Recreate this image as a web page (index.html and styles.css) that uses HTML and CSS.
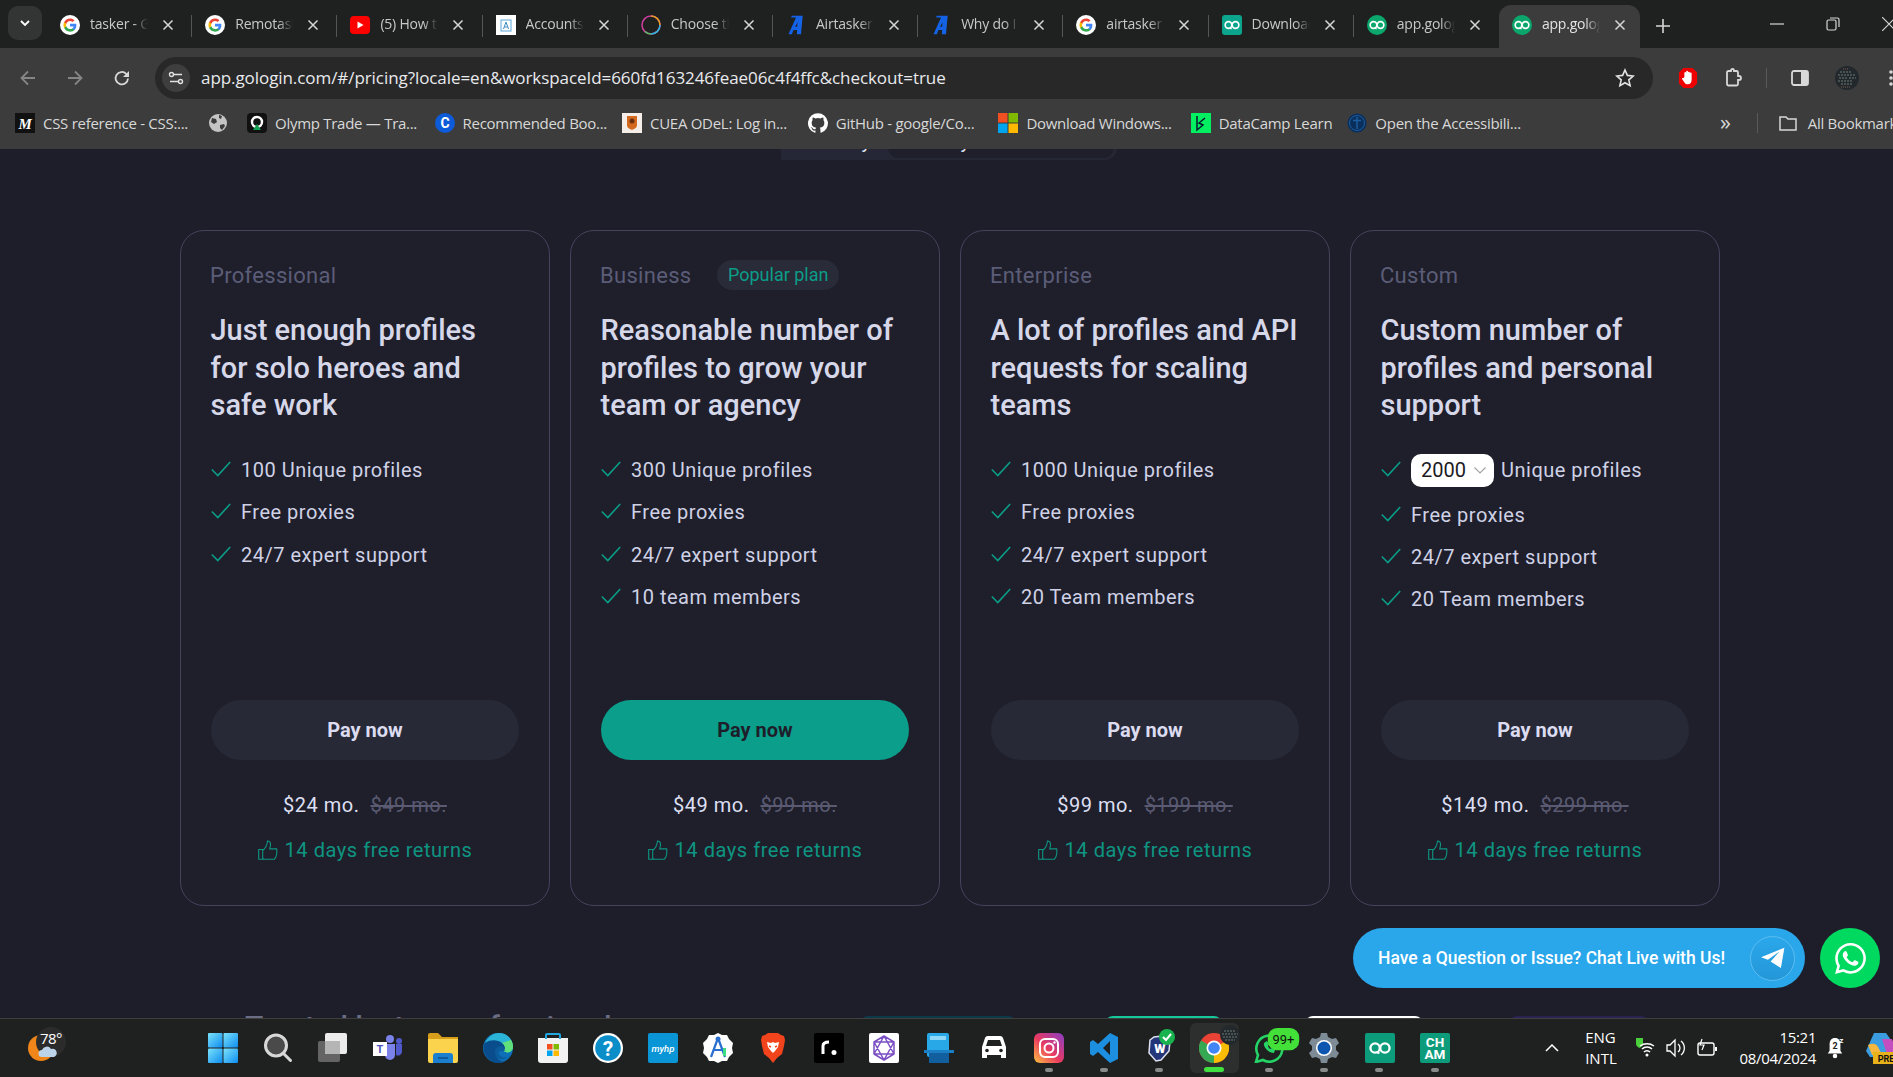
FILE: index.html
```html
<!DOCTYPE html>
<html lang="en">
<head>
<meta charset="utf-8">
<title>GoLogin pricing</title>
<link rel="stylesheet" href="styles.css">
</head>
<body>
<svg class="defs" aria-hidden="true">
  <symbol id="g" viewBox="0 0 24 24">
    <circle cx="12" cy="12" r="12" fill="#fff"/>
    <g transform="translate(3.4 3.4) scale(.72)">
    <path fill="#4285F4" d="M22.56 12.25c0-.78-.07-1.53-.2-2.25H12v4.26h5.92c-.26 1.37-1.04 2.53-2.21 3.31v2.77h3.57c2.08-1.92 3.28-4.74 3.28-8.09z"/>
    <path fill="#34A853" d="M12 23c2.97 0 5.46-.98 7.28-2.66l-3.57-2.77c-.98.66-2.23 1.06-3.71 1.06-2.86 0-5.29-1.93-6.16-4.53H2.18v2.84C3.99 20.53 7.7 23 12 23z"/>
    <path fill="#FBBC05" d="M5.84 14.09c-.22-.66-.35-1.36-.35-2.09s.13-1.43.35-2.09V7.07H2.18C1.43 8.55 1 10.22 1 12s.43 3.45 1.18 4.93l2.85-2.22.81-.62z"/>
    <path fill="#EA4335" d="M12 5.38c1.62 0 3.06.56 4.21 1.64l3.15-3.15C17.45 2.09 14.97 1 12 1 7.7 1 3.99 3.47 2.18 7.07l3.66 2.84c.87-2.6 3.3-4.53 6.16-4.53z"/>
    </g>
  </symbol>
  <symbol id="close" viewBox="0 0 12 12"><path d="M1.5 1.5l9 9M10.500 1.500l-9 9" stroke="#d6d6d6" stroke-width="1.500" fill="none"/></symbol>
  <symbol id="inf" viewBox="0 0 24 24"><circle cx="7.800" cy="12" r="4" fill="none" stroke="#fff" stroke-width="2"/><circle cx="16.200" cy="12" r="4" fill="none" stroke="#fff" stroke-width="2"/><path d="M9 15.500l2.500 1" stroke="#fff" stroke-width="1.800"/></symbol>
  <symbol id="airtasker" viewBox="0 0 20 24"><path d="M13 1h5l-2 22h-5l.4-5H7l-2 5H1L10 3H4l1-2h8zm-1.200 8L9 14h2.400z" fill="#1463e6" fill-rule="evenodd"/></symbol>
  <symbol id="check" viewBox="0 0 20 16"><path d="M.8 8.500l6 6L19.200 1" fill="none" stroke="#0a9d87" stroke-width="1.600"/></symbol>
  <symbol id="thumb" viewBox="0 0 20 20"><path d="M.7 9.500h4v9.800h-4zM4.700 10.500c2-1.500 4.300-4.500 4.800-9.500 2 0 3 1.500 3 3.500 0 1.500-.5 3-.8 4.400h7c.5 5-1 9-2.500 10.400H6.500l-1.800-.8" fill="none" stroke="#0e9582" stroke-width="1.100"/></symbol>
  <symbol id="wa" viewBox="0 0 24 24"><path fill="#fff" d="M17.472 14.382c-.297-.149-1.758-.867-2.03-.967-.273-.099-.471-.148-.67.15-.197.297-.767.966-.94 1.164-.173.199-.347.223-.644.075-.297-.15-1.255-.463-2.39-1.475-.883-.788-1.48-1.761-1.653-2.059-.173-.297-.018-.458.13-.606.134-.133.298-.347.446-.52.149-.174.198-.298.298-.497.099-.198.05-.371-.025-.52-.075-.149-.669-1.612-.916-2.207-.242-.579-.487-.5-.669-.51-.173-.008-.371-.01-.57-.01-.198 0-.52.074-.792.372-.272.297-1.04 1.016-1.04 2.479 0 1.462 1.065 2.875 1.213 3.074.149.198 2.096 3.2 5.077 4.487.709.306 1.262.489 1.694.625.712.227 1.36.195 1.871.118.571-.085 1.758-.719 2.006-1.413.248-.694.248-1.289.173-1.413-.074-.124-.272-.198-.57-.347m-5.421 7.403h-.004a9.87 9.87 0 01-5.031-1.378l-.361-.214-3.741.982.998-3.648-.235-.374a9.86 9.86 0 01-1.51-5.26c.001-5.45 4.436-9.884 9.888-9.884 2.64 0 5.122 1.03 6.988 2.898a9.825 9.825 0 012.893 6.994c-.003 5.45-4.437 9.884-9.885 9.884m8.413-18.297A11.815 11.815 0 0012.05 0C5.495 0 .16 5.335.157 11.892c0 2.096.547 4.142 1.588 5.945L.057 24l6.305-1.654a11.882 11.882 0 005.683 1.448h.005c6.554 0 11.89-5.335 11.893-11.893a11.821 11.821 0 00-3.48-8.413Z"/></symbol>
</svg>

<header class="chrome">
  <div class="tabstrip">
    <button class="tab-search"><svg class="i12" viewBox="0 0 12 12"><path d="M2 4l4 4 4-4" fill="none" stroke="#fff" stroke-width="1.800"/></svg></button>
    <div class="tab"><svg class="fav"><use href="#g"/></svg><span class="tab-title">tasker - Google</span><svg class="tab-x"><use href="#close"/></svg></div>
    <div class="tab"><svg class="fav"><use href="#g"/></svg><span class="tab-title">Remotasker</span><svg class="tab-x"><use href="#close"/></svg></div>
    <div class="tab"><svg class="fav" viewBox="0 0 20 20"><rect y="1" width="20" height="18" rx="4" fill="#f00"/><path d="M7.500 6.500l6 3.500-6 3.500z" fill="#fff"/></svg><span class="tab-title">(5) How to</span><svg class="tab-x"><use href="#close"/></svg></div>
    <div class="tab"><svg class="fav" viewBox="0 0 20 20"><rect width="20" height="20" fill="#fff"/><rect x="5" y="5" width="10" height="11" fill="none" stroke="#5aa7d8"/><path d="M7.500 14l2.500-7 2.500 7M8.500 12h3" fill="none" stroke="#3b8ac4"/></svg><span class="tab-title">Accounts</span><svg class="tab-x"><use href="#close"/></svg></div>
    <div class="tab"><svg class="fav" viewBox="0 0 20 20"><circle cx="10" cy="10" r="9" fill="none" stroke="#d13fa0" stroke-width="1.500"/><path d="M10 1a9 9 0 0 1 9 9" fill="none" stroke="#e8a020" stroke-width="1.500"/><path d="M19 10a9 9 0 0 1-9 9" fill="none" stroke="#30b8e0" stroke-width="1.500"/><path d="M10 19a9 9 0 0 1-6 -2.500" fill="none" stroke="#50c060" stroke-width="1.500"/></svg><span class="tab-title">Choose the</span><svg class="tab-x"><use href="#close"/></svg></div>
    <div class="tab"><svg class="fav"><use href="#airtasker"/></svg><span class="tab-title">Airtasker</span><svg class="tab-x"><use href="#close"/></svg></div>
    <div class="tab"><svg class="fav"><use href="#airtasker"/></svg><span class="tab-title">Why do I</span><svg class="tab-x"><use href="#close"/></svg></div>
    <div class="tab"><svg class="fav"><use href="#g"/></svg><span class="tab-title">airtasker</span><svg class="tab-x"><use href="#close"/></svg></div>
    <div class="tab"><svg class="fav fav-square"><use href="#inf"/></svg><span class="tab-title">Download</span><svg class="tab-x"><use href="#close"/></svg></div>
    <div class="tab tab-noline"><svg class="fav fav-round"><use href="#inf"/></svg><span class="tab-title">app.gologin</span><svg class="tab-x"><use href="#close"/></svg></div>
    <div class="tab tab-active"><svg class="fav fav-round"><use href="#inf"/></svg><span class="tab-title">app.gologin</span><svg class="tab-x"><use href="#close"/></svg></div>
    <svg class="tab-new" viewBox="0 0 14 14"><path d="M7 0v14M0 7h14" stroke="#d6d6d6" stroke-width="1.600"/></svg>
    <div class="winctl">
      <svg class="win-btn" viewBox="0 0 14 14"><path d="M0 7h14" stroke="#d6d6d6" stroke-width="1.200"/></svg>
      <svg class="win-btn" viewBox="0 0 14 14"><rect x="1" y="3" width="9" height="10" rx="1.500" fill="none" stroke="#d6d6d6" stroke-width="1.200"/><path d="M4 1h7.500A1.500 1.500 0 0 1 13 2.500V10" fill="none" stroke="#d6d6d6" stroke-width="1.200"/></svg>
      <svg class="win-btn" viewBox="0 0 14 14"><path d="M0 0l14 14M14 0L0 14" stroke="#d6d6d6" stroke-width="1.200"/></svg>
    </div>
  </div>

  <div class="toolbar">
    <svg class="nav nav-off" viewBox="0 0 20 20"><path d="M17 10H4M10 3.500L3.500 10l6.500 6.500" fill="none" stroke="#858585" stroke-width="1.800"/></svg>
    <svg class="nav nav-off" viewBox="0 0 20 20"><path d="M3 10h13M10 3.500l6.500 6.500-6.500 6.500" fill="none" stroke="#858585" stroke-width="1.800"/></svg>
    <svg class="nav" viewBox="0 0 20 20"><path d="M16 10.500A6.200 6.200 0 1 1 14.200 5.800L16.500 8" fill="none" stroke="#d8d8d8" stroke-width="1.800"/><path d="M17 3v6h-6z" fill="#d8d8d8"/></svg>
    <div class="omnibox">
      <span class="site-info"><svg class="i16" viewBox="0 0 16 16"><path d="M6 4.500h8M2 11.500h8" stroke="#e3e3e3" stroke-width="1.400"/><circle cx="3.500" cy="4.500" r="2" fill="none" stroke="#e3e3e3" stroke-width="1.400"/><circle cx="12.500" cy="11.500" r="2" fill="none" stroke="#e3e3e3" stroke-width="1.400"/></svg></span>
      <span class="url">app.gologin.com/#/pricing?locale=en&amp;workspaceId=660fd163246feae06c4f4ffc&amp;checkout=true</span>
      <svg class="star" viewBox="0 0 20 20"><path d="M10 2l2.400 5.400 5.800.6-4.400 3.900 1.300 5.800L10 14.700l-5.100 3 1.300-5.800L1.800 8l5.800-.6z" fill="none" stroke="#e3e3e3" stroke-width="1.600"/></svg>
    </div>
    <div class="tool-icons">
      <svg class="tool tool-hand" viewBox="0 0 22 24"><path d="M6 1h10l5 5v12l-5 5H6l-5-5V6z" fill="#e00"/><path d="M7 11V6.500a1 1 0 0 1 2 0V5a1 1 0 0 1 2 0v1a1 1 0 0 1 2 0v1a1 1 0 0 1 2 0v7c0 3-1.500 5-4 5s-3.500-1.500-4.500-3l-2-3c-.5-1 .5-1.500 1.300-.8z" fill="#fff"/></svg>
      <svg class="tool tool-ext" viewBox="0 0 20 20"><path d="M4 4.500A1.500 1.500 0 0 1 5.500 3H8V2.500a1.500 1.500 0 0 1 3 0V3h2.500A1.500 1.500 0 0 1 15 4.500V8h1a2 2 0 0 1 0 4h-1v4a1.500 1.500 0 0 1-1.500 1.500h-8A1.500 1.500 0 0 1 4 16z" fill="none" stroke="#d8d8d8" stroke-width="1.800"/></svg>
      <span class="tool-sep"></span>
      <svg class="tool tool-panel" viewBox="0 0 20 20"><rect x="2" y="3" width="16" height="14" rx="2" fill="none" stroke="#d8d8d8" stroke-width="1.800"/><rect x="11" y="3" width="7" height="14" fill="#d8d8d8"/></svg>
      <svg class="avatar" viewBox="0 0 24 24"><circle cx="12" cy="12" r="12" fill="#23282c"/><path d="M5 6h12M3 9h17M4 12h8M14 12h7M3 15h15M6 18h11" stroke="#6f7d74" stroke-width="1.200" stroke-dasharray="2 1"/><path d="M8 3h6M6 21h10" stroke="#7d5a4a" stroke-width="1.200" stroke-dasharray="1 1"/></svg>
      <svg class="tool-menu" viewBox="0 0 4 20"><circle cx="2" cy="4" r="1.800" fill="#d8d8d8"/><circle cx="2" cy="10" r="1.800" fill="#d8d8d8"/><circle cx="2" cy="16" r="1.800" fill="#d8d8d8"/></svg>
    </div>
  </div>

  <nav class="bookmarks">
    <a class="bm bm-css"><svg class="bm-ico" viewBox="0 0 20 20"><rect width="20" height="20" fill="#111"/><text x="10" y="15.500" class="mdn">M</text></svg><span>CSS reference - CSS:...</span></a>
    <a class="bm bm-globe"><svg class="bm-ico" viewBox="0 0 20 20"><circle cx="10" cy="10" r="9" fill="#c4c4c4"/><path d="M4 5l4 1 1 3-3 2-3-2zM12 12l4-1 1 2-3 4-2-2zM11 2l3 1-1 3-2-1z" fill="#3c3c3c"/></svg></a>
    <a class="bm bm-olymp"><svg class="bm-ico" viewBox="0 0 20 20"><rect width="20" height="20" rx="4" fill="#111"/><circle cx="10" cy="9" r="5" fill="none" stroke="#fff" stroke-width="2.400"/><path d="M6 17l4-6 4 6z" fill="#12a150"/></svg><span>Olymp Trade — Tra...</span></a>
    <a class="bm bm-rec"><svg class="bm-ico" viewBox="0 0 20 20"><circle cx="10" cy="10" r="10" fill="#0d5bd8"/><text x="10" y="15" class="coin">C</text></svg><span>Recommended Boo...</span></a>
    <a class="bm bm-cuea"><svg class="bm-ico" viewBox="0 0 20 20"><rect width="20" height="20" fill="#f5eee8"/><path d="M5 3h10v9c0 3-3 4-5 5-2-1-5-2-5-5z" fill="#d2691e"/><circle cx="10" cy="8" r="2.500" fill="#6b2f10"/></svg><span>CUEA ODeL: Log in...</span></a>
    <a class="bm bm-gh"><svg class="bm-ico" viewBox="0 0 24 24"><path fill="#fff" d="M12 .3a12 12 0 0 0-3.800 23.400c.6.100.8-.3.8-.6v-2c-3.300.7-4-1.600-4-1.600-.5-1.400-1.300-1.800-1.300-1.800-1.100-.7.100-.7.100-.7 1.200.1 1.800 1.200 1.800 1.200 1.100 1.800 2.800 1.300 3.500 1 .1-.8.4-1.300.8-1.600-2.700-.3-5.500-1.300-5.500-5.900 0-1.300.5-2.400 1.200-3.200-.1-.3-.5-1.500.1-3.200 0 0 1-.3 3.300 1.200a11.500 11.500 0 0 1 6 0c2.300-1.500 3.300-1.200 3.300-1.200.6 1.700.2 2.900.1 3.200.8.8 1.200 1.900 1.200 3.200 0 4.600-2.800 5.600-5.500 5.900.4.400.8 1.100.8 2.200v3.300c0 .3.2.7.8.6A12 12 0 0 0 12 .3"/></svg><span>GitHub - google/Co...</span></a>
    <a class="bm bm-ms"><svg class="bm-ico" viewBox="0 0 20 20"><rect width="9.500" height="9.500" fill="#f25022"/><rect x="10.500" width="9.500" height="9.500" fill="#7fba00"/><rect y="10.500" width="9.500" height="9.500" fill="#00a4ef"/><rect x="10.500" y="10.500" width="9.500" height="9.500" fill="#ffb900"/></svg><span>Download Windows...</span></a>
    <a class="bm bm-dc"><svg class="bm-ico" viewBox="0 0 20 20"><rect width="20" height="20" fill="#03ef62"/><path d="M6 3v14l6-5-4-2 6-5" fill="none" stroke="#05192d" stroke-width="1.500"/></svg><span>DataCamp Learn</span></a>
    <a class="bm bm-acc"><svg class="bm-ico" viewBox="0 0 20 20"><circle cx="10" cy="10" r="9.500" fill="#0b2f5c"/><circle cx="10" cy="10" r="7.500" fill="none" stroke="#1b5d9e"/><path d="M10 4v12M6 7.500h8" stroke="#1b5d9e" stroke-width="1.500"/></svg><span>Open the Accessibili...</span></a>
    <a class="bm-more">»</a>
    <span class="bm-sep"></span>
    <a class="bm bm-all"><svg class="bm-ico" viewBox="0 0 20 20"><path d="M2 4h6l2 2h8v11H2z" fill="none" stroke="#d8d8d8" stroke-width="1.500"/></svg><span>All Bookmarks</span></a>
  </nav>
</header>

<main class="page">
  <div class="period">
    <span class="period-month">Monthly</span>
    <span class="period-year">Yearly −50%</span>
  </div>

  <section class="plans">
    <article class="plan">
      <div class="plan-top"><span class="plan-name">Professional</span></div>
      <h2 class="plan-head">Just enough profiles for solo heroes and safe work</h2>
      <ul class="feats">
        <li><svg class="chk"><use href="#check"/></svg>100 Unique profiles</li>
        <li><svg class="chk"><use href="#check"/></svg>Free proxies</li>
        <li><svg class="chk"><use href="#check"/></svg>24/7 expert support</li>
      </ul>
      <button class="pay">Pay now</button>
      <p class="price">$24 mo.<s>$49 mo.</s></p>
      <p class="returns"><svg class="thumb"><use href="#thumb"/></svg>14 days free returns</p>
    </article>

    <article class="plan">
      <div class="plan-top"><span class="plan-name">Business</span><span class="badge">Popular plan</span></div>
      <h2 class="plan-head">Reasonable number of profiles to grow your team or agency</h2>
      <ul class="feats">
        <li><svg class="chk"><use href="#check"/></svg>300 Unique profiles</li>
        <li><svg class="chk"><use href="#check"/></svg>Free proxies</li>
        <li><svg class="chk"><use href="#check"/></svg>24/7 expert support</li>
        <li><svg class="chk"><use href="#check"/></svg>10 team members</li>
      </ul>
      <button class="pay pay-main">Pay now</button>
      <p class="price">$49 mo.<s>$99 mo.</s></p>
      <p class="returns"><svg class="thumb"><use href="#thumb"/></svg>14 days free returns</p>
    </article>

    <article class="plan">
      <div class="plan-top"><span class="plan-name">Enterprise</span></div>
      <h2 class="plan-head">A lot of profiles and API requests for scaling teams</h2>
      <ul class="feats">
        <li><svg class="chk"><use href="#check"/></svg>1000 Unique profiles</li>
        <li><svg class="chk"><use href="#check"/></svg>Free proxies</li>
        <li><svg class="chk"><use href="#check"/></svg>24/7 expert support</li>
        <li><svg class="chk"><use href="#check"/></svg>20 Team members</li>
      </ul>
      <button class="pay">Pay now</button>
      <p class="price">$99 mo.<s>$199 mo.</s></p>
      <p class="returns"><svg class="thumb"><use href="#thumb"/></svg>14 days free returns</p>
    </article>

    <article class="plan">
      <div class="plan-top"><span class="plan-name">Custom</span></div>
      <h2 class="plan-head">Custom number of profiles and personal support</h2>
      <ul class="feats">
        <li class="feat-select"><svg class="chk"><use href="#check"/></svg><span class="select">2000<svg class="caret" viewBox="0 0 12 7"><path d="M.5.500L6 6 11.500.500" fill="none" stroke="#a3a3a3" stroke-width="1.200"/></svg></span>Unique profiles</li>
        <li><svg class="chk"><use href="#check"/></svg>Free proxies</li>
        <li><svg class="chk"><use href="#check"/></svg>24/7 expert support</li>
        <li><svg class="chk"><use href="#check"/></svg>20 Team members</li>
      </ul>
      <button class="pay">Pay now</button>
      <p class="price">$149 mo.<s>$299 mo.</s></p>
      <p class="returns"><svg class="thumb"><use href="#thumb"/></svg>14 days free returns</p>
    </article>
  </section>

  <section class="trusted">
    <h3 class="trusted-title">Trusted by top professionals</h3>
    <span class="logo logo-a"></span>
    <span class="logo logo-b"></span>
    <span class="logo logo-c"></span>
    <span class="logo logo-d"></span>
  </section>

  <div class="chat">
    <a class="chat-pill">Have a Question or Issue? Chat Live with Us!
      <span class="chat-tg"><svg class="tg" viewBox="0 0 24 24"><path d="M22.500 2.500L1 11.200l6.300 2.500L18 6l-8.200 9.200v.1l9.500 6z" fill="#fff"/></svg></span>
    </a>
    <a class="chat-wa"><svg class="wa"><use href="#wa"/></svg></a>
  </div>
</main>

<footer class="taskbar">
  <div class="widget">
    <svg class="weather" viewBox="0 0 30 26"><ellipse cx="14" cy="13" rx="13" ry="13" fill="#f0861a"/></svg>
    <span class="temp">78°</span>
    <svg class="cloud" viewBox="0 0 20 12"><path d="M4 11a3.500 3.500 0 0 1 0-7 5 5 0 0 1 9-1 4 4 0 0 1 3 8z" fill="#bcd4ea"/></svg>
  </div>
  <div class="apps">
    <span class="app"><svg class="ico" viewBox="0 0 30 30"><defs><linearGradient id="w" x1="0" y1="0" x2="1" y2="1"><stop offset="0" stop-color="#7be3fb"/><stop offset="1" stop-color="#0d8cf0"/></linearGradient></defs><rect width="14.500" height="14.500" rx="1" fill="url(#w)"/><rect x="15.500" width="14.500" height="14.500" rx="1" fill="url(#w)"/><rect y="15.500" width="14.500" height="14.500" rx="1" fill="url(#w)"/><rect x="15.500" y="15.500" width="14.500" height="14.500" rx="1" fill="url(#w)"/></svg></span>
    <span class="app"><svg class="ico" viewBox="0 0 30 30"><circle cx="13" cy="12.500" r="10.500" fill="#4a4a4a" stroke="#d8d8d8" stroke-width="3"/><path d="M20.500 20.500l7 7" stroke="#d8d8d8" stroke-width="3" stroke-linecap="round"/></svg></span>
    <span class="app"><svg class="ico" viewBox="0 0 30 30"><rect x="7" y="0" width="22" height="21" rx="2" fill="#ececec"/><rect y="8" width="22" height="21" rx="2" fill="#6a6a6a" fill-opacity=".92"/><rect x="7" y="8" width="15" height="13" fill="#b5b5b5"/></svg></span>
    <span class="app"><svg class="ico" viewBox="0 0 30 30"><circle cx="17" cy="6" r="4" fill="#7b83eb"/><circle cx="26" cy="8" r="3" fill="#5059c9"/><path d="M12 11h10v11a5 5 0 0 1-10 0z" fill="#7b83eb"/><path d="M23 11h6v8a4 4 0 0 1-6 3z" fill="#5059c9"/><rect y="9" width="14" height="14" fill="#fff"/><text x="7" y="20" class="teams">T</text></svg></span>
    <span class="app"><svg class="ico" viewBox="0 0 30 30"><path d="M0 2a2 2 0 0 1 2-2h8l4 4h16v6H0z" fill="#d69e1b"/><path d="M0 6h30v22a2 2 0 0 1-2 2H2a2 2 0 0 1-2-2z" fill="#fcd34d"/><path d="M5 30v-7a3 3 0 0 1 3-3h14a3 3 0 0 1 3 3v7z" fill="#1b7fd0"/><path d="M10 25h10" stroke="#0c4f8c" stroke-width="1.500"/></svg></span>
    <span class="app"><svg class="ico" viewBox="0 0 30 30"><circle cx="15" cy="15" r="15" fill="#0c6fb8"/><path d="M2 9A15 15 0 0 1 30 14c0 4-4 6-7 4-1-1-1-3-3-4-4-2-8 1-8 5 0 5 4 9 9 10A15 15 0 0 1 2 9z" fill="#0a4d8c"/><path d="M2 10C5 3 11 0 16 0c8 0 14 6 14 14 0 5-6 7-9 4 2-2 1-6-2-8-4-3-11-4-17 0z" fill="#2bb4d8"/><path d="M28 7c2 3 2 6 2 7 0 5-6 7-9 4 2-2 1-6-2-8z" fill="#5fe07a"/><path d="M12 19c0-4 4-7 8-5 2 1 1 3 3 4h-5c-2 0-3 1-2 3 1 3 5 4 8 3-3 4-12 3-12-5z" fill="#0c2f58" fill-opacity=".3"/></svg></span>
    <span class="app"><svg class="ico" viewBox="0 0 30 30"><path d="M0 5h30v22a3 3 0 0 1-3 3H3a3 3 0 0 1-3-3z" fill="#f2f2f2"/><path d="M8 6V2a1 1 0 0 1 1-1h12a1 1 0 0 1 1 1v4" fill="none" stroke="#22a7e0" stroke-width="2"/><rect x="9" y="11" width="5.500" height="5.500" fill="#f25022"/><rect x="15.500" y="11" width="5.500" height="5.500" fill="#7fba00"/><rect x="9" y="17.500" width="5.500" height="5.500" fill="#00a4ef"/><rect x="15.500" y="17.500" width="5.500" height="5.500" fill="#ffb900"/></svg></span>
    <span class="app"><svg class="ico" viewBox="0 0 30 30"><circle cx="15" cy="15" r="15" fill="#fff"/><circle cx="15" cy="15" r="12.800" fill="#0b8dc7"/><text x="15" y="22.500" class="help">?</text></svg></span>
    <span class="app"><svg class="ico" viewBox="0 0 30 30"><rect width="30" height="30" rx="2" fill="#0a96d6"/><text x="15" y="19" class="myhp">myhp</text></svg></span>
    <span class="app"><svg class="ico" viewBox="0 0 30 30"><path d="M15 0l4 2 5 0 2 4 4 4-1 5 1 5-4 4-2 4-5 0-4 2-4-2-5 0-2-4-4-4 1-5-1-5 4-4 2-4 5 0z" fill="#fff"/><path d="M15 5L8 24M15 5l7 19M10 17h10" stroke="#2a6ecf" stroke-width="2.200" fill="none"/><circle cx="15" cy="6" r="2.500" fill="#2a6ecf"/><path d="M20 15h3v8h-3z" fill="#3ddc84"/></svg></span>
    <span class="app"><svg class="ico" viewBox="0 0 30 30"><path d="M7 2l3-2h10l3 2 3 1 1 4-1 6-2 8-5 4-4 5-4-5-5-4-2-8-1-6 1-4z" fill="#f1431c"/><path d="M9 9l4 1 2-1 2 1 4-1-1 5-3 4-2 2-2-2-3-4z" fill="#fff"/><path d="M11 13l2 1M19 13l-2 1" stroke="#f1431c" stroke-width="1.400"/></svg></span>
    <span class="app"><svg class="ico" viewBox="0 0 30 30"><rect width="30" height="30" rx="2" fill="#000"/><path d="M9 21V13c0-3 2-4 6-4" fill="none" stroke="#fff" stroke-width="3"/><circle cx="20" cy="19.500" r="2.500" fill="#fff"/></svg></span>
    <span class="app"><svg class="ico" viewBox="0 0 30 30"><rect width="30" height="30" rx="2" fill="#fff"/><path d="M15 3l10 6v12l-10 6-10-6V9z M15 3l10 18H5z M15 27L5 9h20z" fill="none" stroke="#7b4fc4" stroke-width="1.500" stroke-linejoin="round"/></svg></span>
    <span class="app"><svg class="ico" viewBox="0 0 30 30"><rect x="3" y="0" width="22" height="24" rx="2" fill="#29a8e8"/><rect x="6" y="3" width="16" height="4" fill="#8fd8f8"/><rect x="0" y="17" width="30" height="3" fill="#1a7fc4"/><rect x="5" y="20" width="20" height="10" fill="#115f9e"/></svg></span>
    <span class="app"><svg class="ico" viewBox="0 0 30 30"><path d="M3 14l3-9a3 3 0 0 1 3-2h12a3 3 0 0 1 3 2l3 9v11h-5v-3H8v3H3zM7 13h16l-2-6H9z" fill="#fff" fill-rule="evenodd"/><circle cx="8" cy="17.500" r="1.800" fill="#1f2120"/><circle cx="22" cy="17.500" r="1.800" fill="#1f2120"/></svg></span>
    <span class="app app-on"><svg class="ico" viewBox="0 0 30 30"><defs><linearGradient id="ig" x1="0" y1="1" x2="1" y2="0"><stop offset="0" stop-color="#fdc341"/><stop offset=".45" stop-color="#ea3a5f"/><stop offset="1" stop-color="#8a3ec8"/></linearGradient></defs><rect width="30" height="30" rx="6" fill="url(#ig)"/><rect x="6" y="6" width="18" height="18" rx="5" fill="none" stroke="#fff" stroke-width="2"/><circle cx="15" cy="15" r="4.500" fill="none" stroke="#fff" stroke-width="2"/><circle cx="20.500" cy="9.500" r="1.200" fill="#fff"/></svg></span>
    <span class="app app-on"><svg class="ico" viewBox="0 0 30 30"><path d="M21 0l8 4v22l-8 4-12-11-5 4-3-2v-12l3-2 5 4zM21 8l-7 7 7 7z" fill="#1c8fe0" fill-rule="evenodd"/></svg></span>
    <span class="app app-on"><svg class="ico ico-wave" viewBox="0 0 34 34"><path d="M8 11l4-3 8-1 8 5-1 10-8 9-5 1-7-8z" fill="#25357a" stroke="#dfe2ee" stroke-width="1.500"/><text x="18" y="24" class="wv">W</text><circle cx="25" cy="8" r="8" fill="#18b34e"/><path d="M21 8l3 3 5-6" fill="none" stroke="#fff" stroke-width="2"/></svg></span>
    <span class="app app-active"><svg class="ico" viewBox="0 0 30 30"><circle cx="15" cy="15" r="15" fill="#ea4335"/><path d="M15 15L28 7.500A15 15 0 0 1 15 30z" fill="#fbbc05"/><path d="M15 15L15 30A15 15 0 0 1 2 7.500z" fill="#34a853"/><circle cx="15" cy="15" r="7.500" fill="#fff"/><circle cx="15" cy="15" r="5.800" fill="#4285f4"/></svg><svg class="chrome-badge" viewBox="0 0 20 20"><circle cx="10" cy="10" r="10" fill="#23282c"/><path d="M4 6h12M2 9h16M3 12h15M5 15h10" stroke="#6f7d74" stroke-dasharray="2 1"/></svg></span>
    <span class="app app-on"><svg class="ico" viewBox="0 0 30 30"><path d="M2 29l2-7A13 13 0 1 1 9 27z" fill="none" stroke="#25d366" stroke-width="2.600"/><path d="M10 10c-1 4 5 10 10 10l1-3-3-2-2 1c-1-1-2-2-2-3l1-2-2-3z" fill="#25d366"/></svg><svg class="wa-badge" viewBox="0 0 34 26"><rect width="34" height="24" rx="10" fill="#43e03a"/><text x="17" y="17" class="nn">99+</text></svg></span>
    <span class="app app-on"><svg class="ico" viewBox="0 0 30 30"><path d="M12 0h6l1 4 4 2 4-1 3 5-3 3v4l3 3-3 5-4-1-4 2-1 4h-6l-1-4-4-2-4 1-3-5 3-3v-4L0 10l3-5 4 1 4-2z" fill="#7d8b97"/><circle cx="15" cy="15" r="8" fill="#fff"/><circle cx="15" cy="15" r="6.500" fill="#0c56b0"/></svg></span>
    <span class="app app-on"><svg class="ico" viewBox="0 0 30 30"><rect width="30" height="30" rx="2" fill="#0d9c7b"/><use href="#inf" x="1" y="1" width="28" height="28"/></svg></span>
    <span class="app app-on"><svg class="ico" viewBox="0 0 30 30"><rect width="30" height="30" rx="2" fill="#0d9c7b"/><text x="15" y="13.500" class="cham">CH</text><text x="15" y="26" class="cham">AM</text></svg></span>
  </div>
  <div class="tray">
    <svg class="tray-up" viewBox="0 0 14 8"><path d="M1 7l6-6 6 6" fill="none" stroke="#fff" stroke-width="1.500"/></svg>
    <span class="lang">ENG<br>INTL</span>
    <svg class="tray-ico tray-wifi" viewBox="0 0 22 24"><path d="M2 2h7v6c0 2-2 3-3.500 4C4 11 2 10 2 8z" fill="#4ad03a"/><path d="M8 13a7 7 0 0 1 10 0M10 16a4 4 0 0 1 6 0M6 10c4-3 10-3 14 0" fill="none" stroke="#fff" stroke-width="1.500"/><circle cx="13" cy="19" r="1.500" fill="#fff"/></svg>
    <svg class="tray-ico" viewBox="0 0 22 22"><path d="M2 8h3l5-5v16l-5-5H2z" fill="none" stroke="#fff" stroke-width="1.300"/><path d="M13 7a5 5 0 0 1 0 8M16 4a9 9 0 0 1 0 14" fill="none" stroke="#fff" stroke-width="1.300"/></svg>
    <svg class="tray-ico" viewBox="0 0 22 22"><rect x="2" y="6" width="16" height="12" rx="2" fill="none" stroke="#fff" stroke-width="1.400"/><path d="M20 10v4" stroke="#fff" stroke-width="2"/><path d="M6 2l-2 6h4l-2 5" fill="none" stroke="#fff" stroke-width="1.200"/></svg>
    <span class="clock">15:21<br>08/04/2024</span>
    <svg class="tray-bell" viewBox="0 0 20 28"><path d="M10 3c-4 0-6 3-6 7v7l-2 3h16l-2-3v-7c0-4-2-7-6-7z" fill="#fff"/><circle cx="10" cy="23" r="2.500" fill="#fff"/><text x="10" y="15" class="bell">2</text><text x="17" y="9" class="zz">z</text></svg>
    <svg class="copilot" viewBox="0 0 32 34"><path d="M8 2h12l10 14-6 10H4l-4-6z" fill="#3b9de0"/><path d="M16 8l10 0 6 16-10 2z" fill="#c34ec0"/><path d="M2 14c4-2 8-2 10 2l4 8H6z" fill="#f6b73c"/><rect x="7" y="21" width="26" height="12" fill="#e8b21a"/><text x="20" y="31" class="pre">PRE</text></svg>
  </div>
</footer>
</body>
</html>
```

FILE: styles.css
```css
* { box-sizing: border-box; }
html, body { margin: 0; height: 100%; }
body {
  width: 1893px;
  height: 1077px;
  overflow: hidden;
  display: flex;
  flex-direction: column;
  background: #1e1e2a;
  font-family: Roboto, "Liberation Sans", sans-serif;
}
.defs { position: absolute; width: 0; height: 0; }
a { color: inherit; text-decoration: none; }

/* browser chrome */
.chrome { flex: 0 0 149px; background: #3c3c3c; font-family: "Open Sans", "Noto Sans", sans-serif; }
.tabstrip { height: 48px; background: #1f2120; display: flex; align-items: flex-end; padding-left: 8px; position: relative; }
.tab-search { width: 34px; height: 34px; margin: 0 5px 8px 0; border: 0; padding: 0; border-radius: 10px; background: #333534; display: flex; align-items: center; justify-content: center; }
.i12 { width: 12px; height: 12px; }
.tab { flex: 0 0 145.200px; height: 43px; display: flex; align-items: center; padding: 0 0 4px 13px; position: relative; color: #c7c9c8; font-size: 14px; }
.tab::after { content: ""; position: absolute; right: 0; top: 10px; height: 22px; width: 1px; background: #555; }
.tab-noline::after, .tab-active::after { display: none; }
.tab-active { background: #3c3c3c; border-radius: 12px 12px 0 0; flex-basis: 141px; color: #e3e3e3; }
.fav { width: 20px; height: 20px; flex: none; }
.fav-square { background: #0aa58c; border-radius: 3px; }
.fav-round { background: #0ba66b; border-radius: 50%; }
.tab-title { flex: none; width: 58px; margin: -2px 0 0 10px; white-space: nowrap; overflow: hidden; -webkit-mask-image: linear-gradient(90deg, #000 75%, transparent); mask-image: linear-gradient(90deg, #000 75%, transparent); letter-spacing: -.2px; }
.tab-x { width: 12px; height: 12px; margin-left: 14px; flex: none; }
.tab-new { width: 14px; height: 14px; margin: 0 0 15px 16px; flex: none; }
.winctl { margin-left: auto; display: flex; gap: 42px; align-self: center; margin-right: -3px; margin-top: -1px; }
.win-btn { width: 14px; height: 14px; }

.toolbar { height: 55px; display: flex; align-items: center; padding: 4px 0 0 18px; }
.nav { width: 20px; height: 20px; margin-right: 27px; flex: none; }
.nav-off { opacity: 1; }
.omnibox { width: 1498px; height: 42px; margin-left: -4px; border-radius: 21px; background: #282828; display: flex; align-items: center; padding: 0 18px 0 7px; flex: none; }
.site-info { width: 28px; height: 28px; border-radius: 50%; background: #3e3e3e; display: flex; align-items: center; justify-content: center; flex: none; }
.i16 { width: 16px; height: 16px; }
.url { margin-left: 11px; color: #e8eaed; font-size: 17px; letter-spacing: -.07px; white-space: nowrap; }
.star { width: 20px; height: 20px; margin-left: auto; flex: none; }
.tool-icons { display: flex; align-items: center; margin-left: 25px; }
.tool { width: 20px; height: 20px; flex: none; }
.tool-hand { width: 20px; height: 22px; }
.tool-ext { margin-left: 25px; }
.tool-sep { width: 1px; height: 20px; background: #5a5a5a; margin: 0 23px 0 23px; }
.tool-panel { margin-right: 25px; }
.avatar { width: 24px; height: 24px; flex: none; }
.tool-menu { width: 4px; height: 20px; margin-left: 30px; flex: none; }

.bookmarks { height: 46px; display: flex; align-items: center; padding: 0 0 7px 15px; color: #d8d8d8; font-size: 15px; letter-spacing: -.28px; white-space: nowrap; }
.bm { display: flex; align-items: center; gap: 8px; flex: none; }
.bm-ico { width: 20px; height: 20px; flex: none; }
.bm-globe { margin-left: 20px; }
.bm-olymp { margin-left: 19px; }
.bm-rec { margin-left: 17.500px; }
.bm-cuea { margin-left: 15px; }
.bm-gh { margin-left: 21px; }
.bm-ms { margin-left: 24px; }
.bm-dc { margin-left: 19px; }
.bm-acc { margin-left: 15px; }
.bm-more { margin-left: auto; color: #d8d8d8; font-size: 22px; line-height: 20px; margin-top: -4px; }
.bm-sep { width: 1px; height: 20px; background: #5a5a5a; margin: 0 20px 0 26px; }
.bm-all { margin-right: -11px; gap: 10px; }
.mdn { font: italic 700 15px "Liberation Serif", serif; fill: #fff; text-anchor: middle; }
.coin { font: 700 14px Roboto, sans-serif; fill: #fff; text-anchor: middle; }

/* page */
.page { flex: 1; min-height: 0; overflow: hidden; position: relative; color: #d6d8ea; }
.period { width: 336px; height: 50px; margin: -39px 0 70px 781px; display: flex; border-radius: 0 0 12px 12px; background: #262735; color: #dfe3f5; font-size: 20px; }
.period-month { width: 107px; text-align: right; padding: 19px 17px 0 0; background: #252736; }
.period-year { flex: 1; margin: 0 3px 2px 0; padding: 19px 0 0 28px; background: #1f1f2b; border-radius: 0 0 10px 10px; white-space: nowrap; overflow: hidden; }
.plans { display: grid; grid-template-columns: repeat(4, 370px); column-gap: 20px; padding-left: 180px; }
.plan { height: 676px; border: 1px solid #45435c; border-radius: 24px; background: #1f1f2b; padding: 30px 30px 40px; display: flex; flex-direction: column; }
.plan-top { height: 30px; margin: -1px 0 1px -1px; display: flex; align-items: center; }
.plan-name { font-size: 22px; color: #5b5d78; letter-spacing: .3px; }
.badge { margin-left: 26px; height: 30px; line-height: 30px; padding: 0 10.500px; border-radius: 15px; background: #2a2b38; color: #0a9e88; font-size: 18px; }
.plan-head { margin: 21px 0 0 -.5px; font-size: 29px; line-height: 37.5px; font-weight: 500; color: #d6d8ea; width: 308px; height: 113px; }
.feats { list-style: none; margin: 24px 0 0; padding: 0; font-size: 20px; letter-spacing: .5px; color: #cfd2e6; }
.feats li { height: 42.3px; display: flex; align-items: center; }
.feats .feat-select { margin-bottom: 2.200px; }
.chk { width: 20px; height: 16px; margin-right: 10px; flex: none; position: relative; top: -1px; }
.select { width: 83px; height: 33px; border-radius: 10px; background: #fff; color: #1b1b1f; padding-left: 10px; margin-right: 7px; display: flex; align-items: center; letter-spacing: 0; flex: none; }
.caret { width: 12px; height: 7px; margin-left: 8px; }
.pay { margin-top: auto; height: 60px; border: 0; border-radius: 30px; background: #272937; color: #dcdcf0; font: 700 20px Roboto, sans-serif; width: 100%; }
.pay-main { background: #0a9e8b; color: #1e1e2a; }
.price { margin: 30px 0 0; text-align: center; line-height: 30px; font-size: 20px; letter-spacing: .5px; color: #dcdff2; }
.price s { margin-left: 11px; color: #5a5a72; }
.returns { margin: 15px 0 0; text-align: center; line-height: 30px; font-size: 20px; letter-spacing: .55px; color: #0e9582; display: flex; align-items: center; justify-content: center; }
.thumb { width: 20px; height: 20px; margin-right: 7px; flex: none; }

.trusted { display: flex; margin-top: 99px; padding-left: 245px; }
.trusted-title { flex: 0 0 615px; margin: 0; font-size: 30px; line-height: 44px; font-weight: 500; color: #6b6d85; white-space: nowrap; }
.logo { height: 60px; margin-top: 11px; border-radius: 8px; flex: none; }
.logo-a { width: 156px; background: #0d3a4a; }
.logo-b { width: 117px; margin-left: 89px; background: #16c79a; }
.logo-c { width: 118px; margin-left: 83px; background: #fff; }
.logo-d { width: 140px; margin-left: 86px; background: #2a2250; }

.chat { position: absolute; left: 1353px; top: 779px; display: flex; gap: 15px; }
.chat-pill { width: 452px; height: 60px; border-radius: 30px; background: #2aa7eb; color: #fff; font-size: 17.500px; font-weight: 500; display: flex; align-items: center; justify-content: space-between; padding: 0 10px 0 25px; }
.chat-tg { width: 45px; height: 45px; border-radius: 50%; border: 1px solid #5abcf0; background: linear-gradient(#2aa7eb, #2497d8); display: flex; align-items: center; justify-content: center; }
.tg { width: 26px; height: 26px; }
.chat-wa { width: 60px; height: 60px; border-radius: 50%; background: #00d95f; display: flex; align-items: center; justify-content: center; }
.wa { width: 31px; height: 31px; }

/* taskbar */
.taskbar { flex: 0 0 59px; border-top: 1px solid #3f3f3f; background: #1f2120; display: flex; position: relative; color: #fff; font-family: "Open Sans", "Noto Sans", sans-serif; }
.widget { flex: 0 0 195px; position: relative; }
.weather { position: absolute; left: 27px; top: 16px; width: 30px; height: 26px; }
.temp { position: absolute; left: 36px; top: 8px; width: 30px; height: 30px; border-radius: 50%; background: #2b2b2b; font-size: 15px; line-height: 22px; text-align: center; letter-spacing: -.5px; }
.cloud { position: absolute; left: 38px; top: 27px; width: 20px; height: 12px; }
.apps { display: flex; flex: none; }
.app { width: 55.100px; position: relative; display: flex; justify-content: center; padding-top: 14px; }
.ico { width: 30px; height: 30px; }
.ico-wave { width: 34px; height: 34px; margin-top: -4px; }
.app-on::after { content: ""; position: absolute; left: 23.500px; bottom: 5px; width: 8px; height: 4px; border-radius: 2px; background: #8a8a8a; }
.app-active::before { content: ""; position: absolute; left: 3px; top: 4px; width: 49px; height: 50px; border-radius: 6px; background: #2d2f2e; }
.app-active::after { content: ""; position: absolute; left: 17px; bottom: 5px; width: 20px; height: 5px; border-radius: 3px; background: #3fe03f; }
.app-active .ico { position: relative; }
.chrome-badge { position: absolute; left: 33px; top: 6px; width: 20px; height: 20px; }
.wa-badge { position: absolute; left: 25px; top: 9px; width: 33px; height: 24px; }
.tray { flex: 1; min-width: 0; display: flex; align-items: center; padding-left: 83px; }
.tray-up { width: 14px; height: 8px; flex: none; }
.lang { margin-left: 26px; font-size: 15px; line-height: 21px; width: 45px; flex: none; }
.tray-ico { width: 22px; height: 22px; flex: none; margin-left: 9px; }
.tray-wifi { width: 22px; height: 24px; margin-left: 4px; }
.clock { margin-left: 14px; width: 84px; flex: none; text-align: right; font-size: 15px; line-height: 21px; letter-spacing: -.3px; white-space: nowrap; }
.tray-bell { width: 18px; height: 26px; margin-left: 10px; flex: none; }
.copilot { width: 32px; height: 34px; margin-left: 22px; flex: none; }
.teams { font: 700 11px Roboto, sans-serif; fill: #4b53bc; text-anchor: middle; }
.help { font: 700 21px Roboto, sans-serif; fill: #fff; text-anchor: middle; }
.myhp { font: italic 500 9.500px Roboto, sans-serif; fill: #fff; text-anchor: middle; }
.wv { font: 900 13px Roboto, sans-serif; fill: #fff; text-anchor: middle; }
.nn { font: 400 14px Roboto, sans-serif; fill: #111; text-anchor: middle; }
.cham { font: 700 13.500px Roboto, sans-serif; fill: #fff; text-anchor: middle; }
.bell { font: 700 10px Roboto, sans-serif; fill: #1f2120; text-anchor: middle; }
.zz { font: 700 9px Roboto, sans-serif; fill: #fff; text-anchor: middle; }
.pre { font: 700 9px Roboto, sans-serif; fill: #111; text-anchor: middle; }
```
